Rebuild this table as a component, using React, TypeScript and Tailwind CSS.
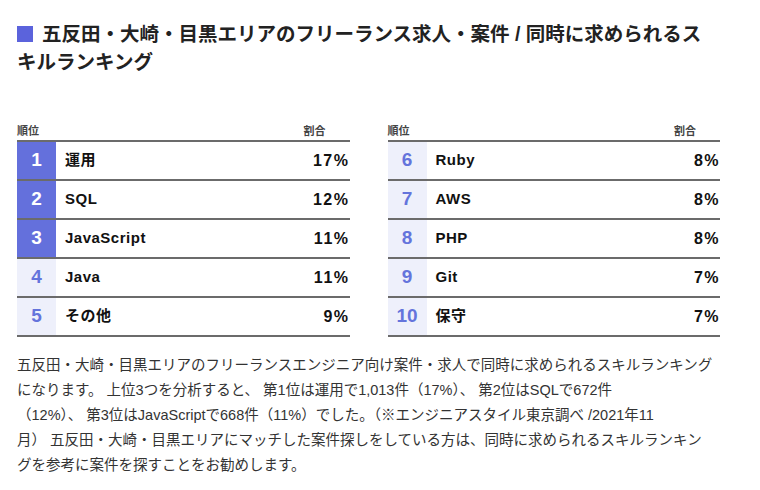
const rows = [
  { rank: 1, name: '運用', pct: '17%' },
  { rank: 2, name: 'SQL', pct: '12%' },
  { rank: 3, name: 'JavaScript', pct: '11%' },
  { rank: 4, name: 'Java', pct: '11%' },
  { rank: 5, name: 'その他', pct: '9%' },
  { rank: 6, name: 'Ruby', pct: '8%' },
  { rank: 7, name: 'AWS', pct: '8%' },
  { rank: 8, name: 'PHP', pct: '8%' },
  { rank: 9, name: 'Git', pct: '7%' },
  { rank: 10, name: '保守', pct: '7%' },
];

function RankTable({ items }: { items: typeof rows }) {
  return (
    <div>
      <div className="flex items-end justify-between h-[18px] pb-[3px] pr-[24px] text-[11px] leading-none text-[#444] font-bold">
        <span>順位</span>
        <span>割合</span>
      </div>
      <div className="border-b-2 border-[#6b6b6b]">
        {items.map((r) => (
          <div
            key={r.rank}
            className="flex items-stretch h-[39px] border-t-2 border-[#6b6b6b]"
          >
            <div
              className={`w-[39px] flex items-center justify-center text-[19px] font-bold font-['Liberation_Sans',sans-serif] ${
                r.rank <= 3
                  ? 'bg-[#6470dc] text-white'
                  : 'bg-[#eef0fb] text-[#6474dc]'
              }`}
            >
              {r.rank}
            </div>
            <div className="flex-1 flex items-center justify-between pl-[9px] pr-0 text-[15px] font-bold text-[#111]">
              <span className="tracking-[0.5px]">{r.name}</span>
              <span className="text-[16px] tracking-[1.5px]">{r.pct}</span>
            </div>
          </div>
        ))}
      </div>
    </div>
  );
}

export default function App() {
  return (
    <div className="w-[760px] h-[490px] bg-white font-['Liberation_Sans','Noto_Sans_CJK_JP',sans-serif] overflow-hidden">
      <div className="w-[703px] ml-[17px] pt-[20px]">
        <h2 className="text-[19.5px] leading-[28px] font-bold text-[#222] whitespace-nowrap">
          <span className="inline-block w-[16px] h-[16px] bg-[#5b63dc] mr-[9px] align-[-1px]"></span>
          五反田・大崎・目黒エリアのフリーランス求人・案件 / 同時に求められるス
          <br />
          キルランキング
        </h2>

        <div className="grid grid-cols-2 gap-[38px] mt-[46px]">
          <RankTable items={rows.slice(0, 5)} />
          <RankTable items={rows.slice(5)} />
        </div>

        <p className="mt-[16px] text-[14.5px] leading-[25px] text-[#333] whitespace-nowrap">
          五反田・大崎・目黒エリアのフリーランスエンジニア向け案件・求人で同時に求められるスキルランキング
          <br />
          になります。 上位3つを分析すると、 第1位は運用で1,013件（17%）、 第2位はSQLで672件
          <br />
          （12%）、 第3位はJavaScriptで668件（11%）でした。（※エンジニアスタイル東京調べ /2021年11
          <br />
          月） 五反田・大崎・目黒エリアにマッチした案件探しをしている方は、同時に求められるスキルランキン
          <br />
          グを参考に案件を探すことをお勧めします。
        </p>
      </div>
    </div>
  );
}
